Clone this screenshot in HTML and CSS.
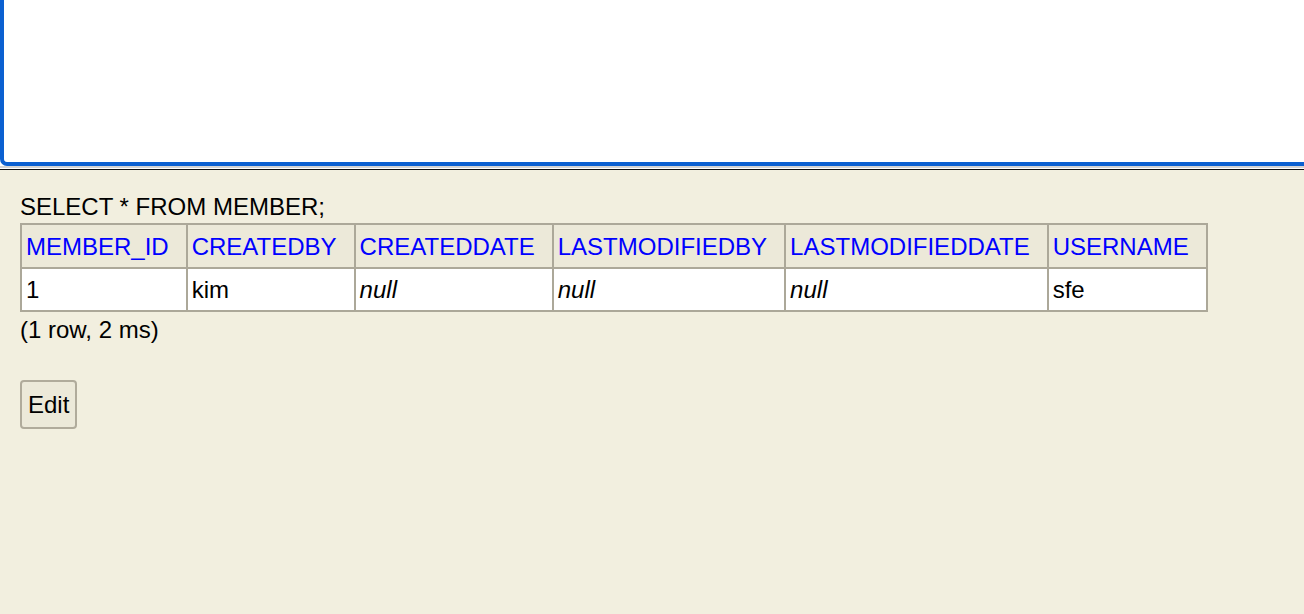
FILE: index.html
```html
<!DOCTYPE html>
<html>
<head>
<meta charset="utf-8">
<title>H2 Console</title>
<link rel="stylesheet" href="styles.css">
</head>
<body>
<div class="editor">
  <textarea class="sql-input" spellcheck="false"></textarea>
</div>
<div class="frame-sep"></div>
<main class="result">
  <div class="query">SELECT * FROM MEMBER;</div>
  <table class="result-set">
    <tr>
      <th>MEMBER_ID</th>
      <th>CREATEDBY</th>
      <th>CREATEDDATE</th>
      <th>LASTMODIFIEDBY</th>
      <th>LASTMODIFIEDDATE</th>
      <th>USERNAME</th>
    </tr>
    <tr>
      <td>1</td>
      <td>kim</td>
      <td><i>null</i></td>
      <td><i>null</i></td>
      <td><i>null</i></td>
      <td>sfe</td>
    </tr>
  </table>
  <div class="status">(1 row, 2 ms)</div>
  <div class="actions">
    <button class="btn" type="button">Edit</button>
  </div>
</main>
</body>
</html>
```
FILE: styles.css
```css
html, body {
  margin: 0;
  padding: 0;
  height: 100%;
}
body {
  display: flex;
  flex-direction: column;
  font-family: "Liberation Sans", Arial, sans-serif;
  font-size: 24px;
  color: #000;
  background: #f2efdf;
  overflow: hidden;
}
.editor {
  height: 166px;
  flex: none;
  background: #fff;
}
.sql-input {
  display: block;
  width: 100%;
  height: 100%;
  box-sizing: border-box;
  margin: 0;
  padding: 4px;
  border: 4px solid #0b60d1;
  border-top: none;
  border-right: none;
  border-bottom-left-radius: 7px;
  outline: none;
  resize: none;
  background: #fff;
  font-family: "Liberation Mono", monospace;
  font-size: 24px;
}
.frame-sep {
  flex: none;
  height: 1px;
  background: #fff;
  border-top: 2px solid #d4d4d4;
  border-bottom: 1px solid #111;
}
.result {
  flex: 1;
  background: #f2efdf;
  padding: 23px 20px 0 20px;
}
.query {
  line-height: 28px;
  margin-bottom: 2px;
}
.result-set {
  border-collapse: collapse;
}
.result-set th,
.result-set td {
  border: 2px solid #aca899;
  padding: 1px 17px 0 4px;
  text-align: left;
  white-space: nowrap;
}
.result-set th {
  background: #ece9d9;
  color: #0000ff;
  font-weight: normal;
  height: 41px;
}
.result-set td {
  background: #fff;
  height: 40px;
}
.result-set td i {
  font-style: italic;
}
.status {
  margin-top: 4px;
  line-height: 28px;
}
.actions {
  margin-top: 36px;
}
.btn {
  font-family: "Liberation Sans", Arial, sans-serif;
  font-size: 24px;
  line-height: 28px;
  color: #000;
  background: #ece9d9;
  border: 2px solid #b0ab9b;
  border-radius: 4px;
  padding: 9px 6px 8px 6px;
  margin: 0;
}
```
